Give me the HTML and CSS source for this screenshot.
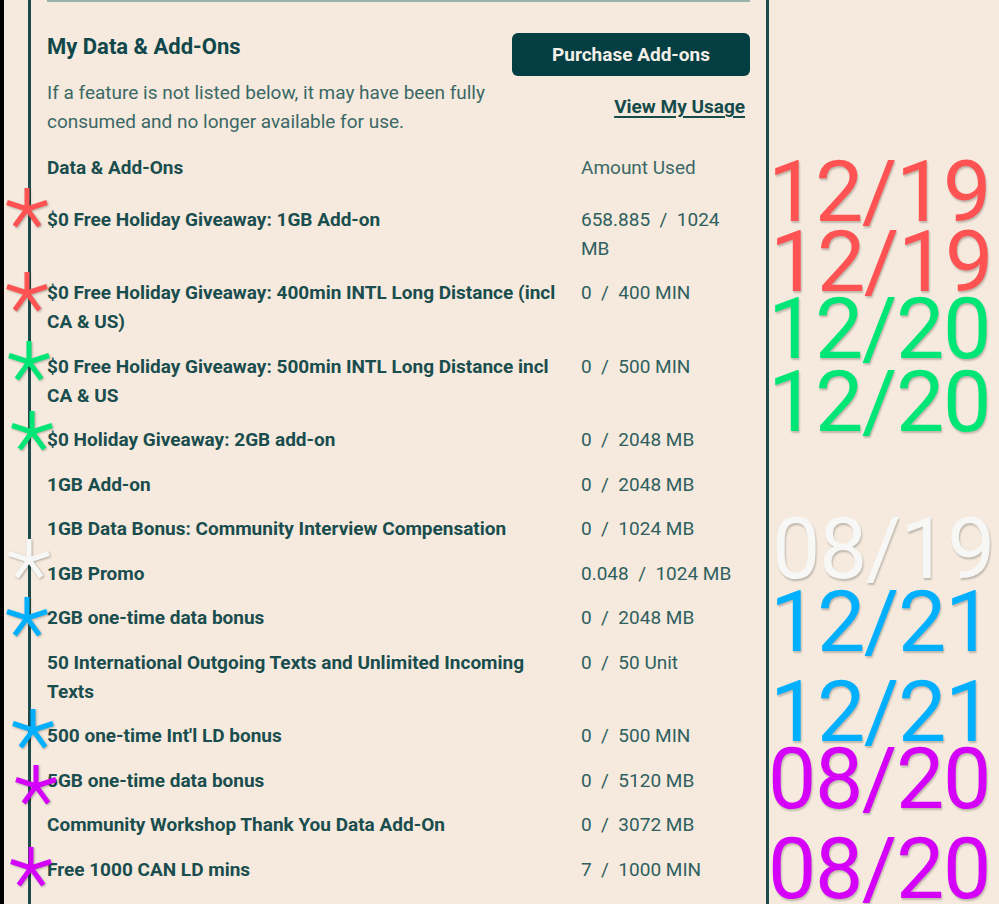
FILE: index.html
```html
<!DOCTYPE html>
<html lang="en">
<head>
<meta charset="utf-8">
<title>My Data &amp; Add-Ons</title>
<link rel="stylesheet" href="styles.css">
</head>
<body>
<div class="page">
  <section class="panel">
    <div class="top-rule"></div>
    <div class="head">
      <div class="head-text">
        <h2 class="title">My Data &amp; Add-Ons</h2>
        <p class="note">If a feature is not listed below, it may have been fully consumed and no longer available for use.</p>
      </div>
      <div class="head-actions">
        <button class="btn" type="button">Purchase Add-ons</button>
        <a class="usage-link" href="#">View My Usage</a>
      </div>
    </div>
    <div class="table">
      <div class="row row-head"><span class="label">Data &amp; Add-Ons</span><span class="amount">Amount Used</span></div>
      <div class="row"><span class="label">$0 Free Holiday Giveaway: 1GB Add-on</span><span class="amount">658.885&nbsp; / &nbsp;1024 MB</span></div>
      <div class="row"><span class="label">$0 Free Holiday Giveaway: 400min INTL Long Distance (incl CA &amp; US)</span><span class="amount">0&nbsp; / &nbsp;400 MIN</span></div>
      <div class="row"><span class="label">$0 Free Holiday Giveaway: 500min INTL Long Distance incl CA &amp; US</span><span class="amount">0&nbsp; / &nbsp;500 MIN</span></div>
      <div class="row"><span class="label">$0 Holiday Giveaway: 2GB add-on</span><span class="amount">0&nbsp; / &nbsp;2048 MB</span></div>
      <div class="row"><span class="label">1GB Add-on</span><span class="amount">0&nbsp; / &nbsp;2048 MB</span></div>
      <div class="row"><span class="label">1GB Data Bonus: Community Interview Compensation</span><span class="amount">0&nbsp; / &nbsp;1024 MB</span></div>
      <div class="row"><span class="label">1GB Promo</span><span class="amount">0.048&nbsp; / &nbsp;1024 MB</span></div>
      <div class="row"><span class="label">2GB one-time data bonus</span><span class="amount">0&nbsp; / &nbsp;2048 MB</span></div>
      <div class="row"><span class="label">50 International Outgoing Texts and Unlimited Incoming Texts</span><span class="amount">0&nbsp; / &nbsp;50 Unit</span></div>
      <div class="row"><span class="label">500 one-time Int'l LD bonus</span><span class="amount">0&nbsp; / &nbsp;500 MIN</span></div>
      <div class="row"><span class="label">5GB one-time data bonus</span><span class="amount">0&nbsp; / &nbsp;5120 MB</span></div>
      <div class="row"><span class="label">Community Workshop Thank You Data Add-On</span><span class="amount">0&nbsp; / &nbsp;3072 MB</span></div>
      <div class="row"><span class="label">Free 1000 CAN LD mins</span><span class="amount">7&nbsp; / &nbsp;1000 MIN</span></div>
    </div>
  </section>

  <!-- hand-drawn annotations laid over the screenshot -->
  <div class="marks">
    <svg class="star red" style="left:-1px;top:185px" viewBox="-24 -24 48 48"><use href="#ast"/></svg>
    <svg class="star red" style="left:-1px;top:269px" viewBox="-24 -24 48 48"><use href="#ast"/></svg>
    <svg class="star green" style="left:1px;top:338px" viewBox="-24 -24 48 48"><use href="#ast"/></svg>
    <svg class="star green" style="left:4px;top:408px" viewBox="-24 -24 48 48"><use href="#ast"/></svg>
    <svg class="star white" style="left:1px;top:536px" viewBox="-24 -24 48 48"><use href="#ast"/></svg>
    <svg class="star blue" style="left:-1px;top:594px" viewBox="-24 -24 48 48"><use href="#ast"/></svg>
    <svg class="star blue" style="left:5px;top:706px" viewBox="-24 -24 48 48"><use href="#ast"/></svg>
    <svg class="star purple" style="left:8px;top:762px" viewBox="-24 -24 48 48"><use href="#ast"/></svg>
    <svg class="star purple" style="left:3px;top:844px" viewBox="-24 -24 48 48"><use href="#ast"/></svg>

    <span class="date red" style="left:764px;top:149px">12/19</span>
    <span class="date red" style="left:766px;top:219px">12/19</span>
    <span class="date green" style="left:764px;top:286px">12/20</span>
    <span class="date green" style="left:764px;top:359px">12/20</span>
    <span class="date white" style="left:768px;top:506px">08/19</span>
    <span class="date blue" style="left:766px;top:579px">12/21</span>
    <span class="date blue" style="left:766px;top:669px">12/21</span>
    <span class="date purple" style="left:764px;top:736px">08/20</span>
    <span class="date purple" style="left:764px;top:826px">08/20</span>
  </div>

  <svg width="0" height="0" class="defs" aria-hidden="true">
    <defs>
      <g id="ast">
        <path d="M0 2 L0 -21 M0 0 L20 -6.5 M0 0 L12.3 17 M0 0 L-12.3 17 M0 0 L-20 -6.5" stroke="currentColor" stroke-width="5" fill="none" stroke-linecap="butt"/>
      </g>
    </defs>
  </svg>
</div>
</body>
</html>
```

FILE: styles.css
```css
* { box-sizing: border-box; }

html, body {
  margin: 0;
  padding: 0;
  background: #f5eadd;
}

body {
  font-family: Roboto, "Noto Sans", "Liberation Sans", sans-serif;
  color: #1a4d4e;
}

.page {
  position: relative;
  min-height: 904px;
  border-left: 4px solid #000;
  padding-left: 24px;
  overflow: hidden;
}

.panel {
  width: 741px;
  min-height: 904px;
  border-left: 3px solid #1b4b4b;
  border-right: 3px solid #1b4b4b;
  padding: 0 16px;
}

.top-rule {
  height: 2px;
  background: #98b1ab;
}

.head {
  display: flex;
  justify-content: space-between;
  align-items: flex-start;
}

.head-text {
  width: 450px;
  padding-top: 31px;
}

.title {
  margin: 0;
  font-size: 22px;
  line-height: 28px;
  font-weight: 700;
  color: #10474a;
}

.note {
  margin: 17px 0 0;
  font-size: 19px;
  line-height: 29px;
  color: #3b6866;
}

.head-actions {
  display: flex;
  flex-direction: column;
  align-items: flex-end;
  padding-top: 31px;
}

.btn {
  width: 238px;
  height: 43px;
  border: 0;
  border-radius: 6px;
  background: #033e42;
  color: #f3efe8;
  font-family: inherit;
  font-size: 19px;
  font-weight: 700;
  cursor: pointer;
}

.usage-link {
  margin-top: 16px;
  margin-right: 5px;
  font-size: 19px;
  line-height: 29px;
  font-weight: 700;
  color: #164a4b;
  text-decoration: underline;
  text-underline-offset: 3px;
  text-decoration-thickness: 2px;
}

.table {
  margin-top: 17px;
}

.row {
  display: grid;
  grid-template-columns: 1fr 169px;
  column-gap: 16px;
  padding: 7.75px 0;
  font-size: 19px;
  line-height: 29px;
}

.row-head {
  padding: 0 0 15px;
}

.label {
  font-weight: 700;
  color: #1a4d4e;
}

.amount {
  color: #2f605f;
}

.row-head .amount {
  color: #3b6866;
}

/* annotations */
.marks {
  position: absolute;
  inset: 0;
  pointer-events: none;
}

.star {
  position: absolute;
  width: 48px;
  height: 48px;
  overflow: visible;
  filter: drop-shadow(1px 1.5px 1px rgba(0, 0, 0, 0.28));
}

.date {
  position: absolute;
  font-family: Roboto, "Noto Sans", sans-serif;
  font-size: 86px;
  line-height: 86px;
  letter-spacing: -1.4px;
  white-space: nowrap;
  text-shadow: 1px 2px 2px rgba(0, 0, 0, 0.22);
}

.red { color: #ff5252; }
.green { color: #00e676; }
.white { color: #f7f7f5; }
.blue { color: #00b0ff; }
.purple { color: #d500f9; }

.defs {
  position: absolute;
  width: 0;
  height: 0;
}
```
